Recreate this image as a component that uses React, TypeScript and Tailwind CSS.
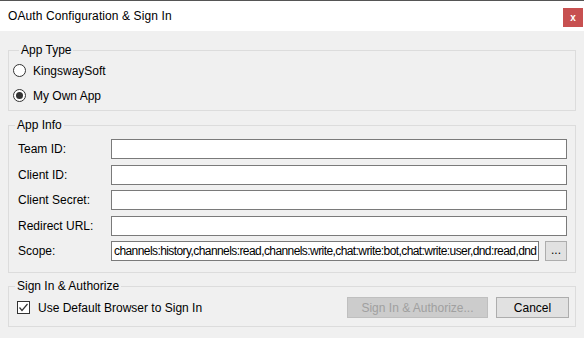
import React from "react";

function Radio({ checked, label }: { checked?: boolean; label: string }) {
  return (
    <div className="flex items-center h-[13px]">
      <div className="w-[13px] h-[13px] rounded-full border border-[#333333] bg-white flex items-center justify-center">
        {checked && <div className="w-[7px] h-[7px] rounded-full bg-[#333333]" />}
      </div>
      <span className="ml-[7px] leading-[14px]">{label}</span>
    </div>
  );
}

function Field({ label, children }: { label: string; children?: React.ReactNode }) {
  return (
    <div className="flex items-center h-[20px]">
      <span className="w-[102px] pl-[9px] leading-[14px]">{label}</span>
      {children ?? <div className="flex-1 h-[20px] bg-white border border-[#7a7a7a]" />}
    </div>
  );
}

export default function App() {
  return (
    <div className="w-[584px] h-[338px] bg-[#f0f0f0] font-['Liberation_Sans',Arial,sans-serif] text-[12px] text-black flex flex-col overflow-hidden">
      <div className="h-[31px] shrink-0 bg-white border-t border-[#555555] flex items-start justify-between">
        <span className="ml-[8px] mt-[8px] leading-[14px] text-[12px] tracking-[0.1px]">OAuth Configuration &amp; Sign In</span>
        <div className="w-[20px] h-[19px] mt-[7px] mr-[1px] bg-[#c75050] flex items-center justify-center text-white font-bold text-[10px] leading-none">
          x
        </div>
      </div>

      <div className="px-[8px] flex flex-col">
        <fieldset className="mt-[12px] h-[68px] border border-[#dcdcdc] pl-[4px] pt-[7px]">
          <legend className="ml-[6px] px-[2px] leading-[14px]">App Type</legend>
          <div className="flex flex-col gap-[12px]">
            <Radio label="KingswaySoft" />
            <Radio checked label="My Own App" />
          </div>
        </fieldset>

        <fieldset className="mt-[7px] h-[155px] border border-[#dcdcdc] pr-[8px] pt-[7px]">
          <legend className="ml-[6px] px-[2px] leading-[14px]">App Info</legend>
          <div className="flex flex-col gap-[5.5px]">
            <Field label="Team ID:" />
            <Field label="Client ID:" />
            <Field label="Client Secret:" />
            <Field label="Redirect URL:" />
            <Field label="Scope:">
              <div className="flex-1 flex items-center gap-[6px]">
                <div className="w-[428px] h-[20px] bg-white border border-[#7a7a7a] overflow-hidden whitespace-nowrap pl-[2px] leading-[18px] tracking-[-0.58px]">
                  channels:history,channels:read,channels:write,chat:write:bot,chat:write:user,dnd:read,dnd
                </div>
                <div className="w-[22px] h-[20px] bg-[#e1e1e1] border border-[#adadad] flex items-center justify-center leading-none pb-[2px]">
                  ...
                </div>
              </div>
            </Field>
          </div>
        </fieldset>

        <fieldset className="mt-[6px] h-[48px] border border-[#dcdcdc] pr-[6px] pt-[4px]">
          <legend className="ml-[6px] px-[2px] leading-[14px]">Sign In &amp; Authorize</legend>
          <div className="flex items-center">
            <div className="ml-[8px] w-[13px] h-[13px] border border-[#333333] bg-white flex items-center justify-center">
              <svg width="11" height="11" viewBox="0 0 11 11">
                <path d="M1.5 5.5 L4 8.5 L9.5 2" fill="none" stroke="#333333" strokeWidth="1.2" />
              </svg>
            </div>
            <span className="ml-[8px] leading-[14px]">Use Default Browser to Sign In</span>
            <div className="ml-auto w-[141px] h-[21px] bg-[#cccccc] border border-[#bfbfbf] text-[#a0a0a0] flex items-center justify-center">
              Sign In &amp; Authorize...
            </div>
            <div className="ml-[8px] w-[73px] h-[21px] bg-[#e1e1e1] border border-[#adadad] flex items-center justify-center">
              Cancel
            </div>
          </div>
        </fieldset>
      </div>
    </div>
  );
}
